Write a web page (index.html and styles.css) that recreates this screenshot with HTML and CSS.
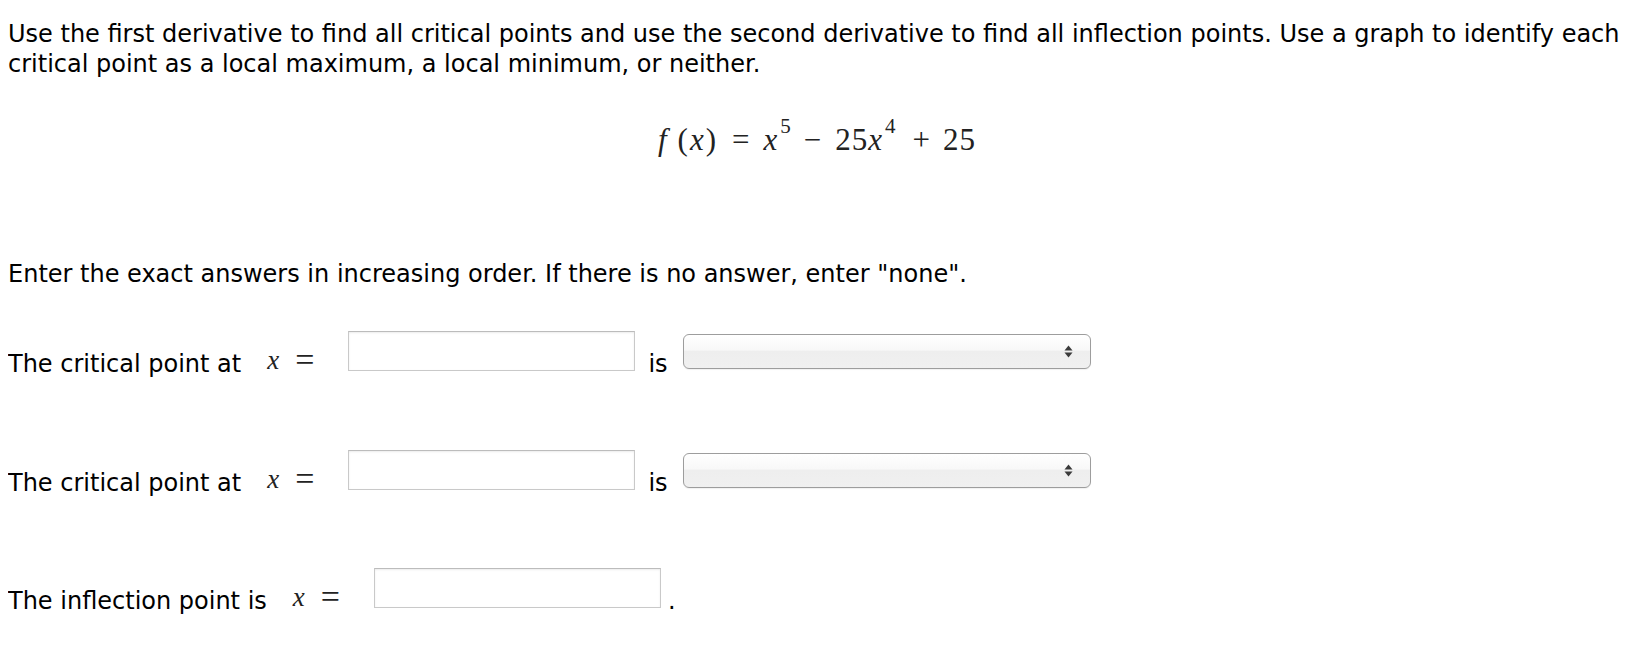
FILE: index.html
```html
<!DOCTYPE html>
<html>
<head>
<meta charset="utf-8">
<link rel="stylesheet" href="styles.css">
</head>
<body>
<p class="intro">Use the first derivative to find all critical points and use the second derivative to find all inflection points. Use a graph to identify each critical point as a local maximum, a local minimum, or neither.</p>
<div class="formula">
  <span class="fn">f</span><span class="paren">(</span><span class="var">x</span><span class="paren">)</span><span class="op">=</span><span class="var">x</span><sup class="sup">5</sup><span class="op op-minus">−</span><span class="num">25</span><span class="var">x</span><sup class="sup">4</sup><span class="op op-plus">+</span><span class="num">25</span>
</div>
<p class="note">Enter the exact answers in increasing order. If there is no answer, enter "none".</p>

<div class="row row-first">
  <span class="label">The critical point at</span>
  <span class="math"><span class="var">x</span><span class="eq">=</span></span>
  <input class="answer" type="text">
  <span class="label is">is</span>
  <div class="select"><span class="arrows"><svg width="9" height="13" viewBox="0 0 9 13"><path d="M4.5 0.5 L8.5 5.5 H0.5 Z" fill="#3a3a3a"/><path d="M4.5 12.5 L8.5 7.5 H0.5 Z" fill="#3a3a3a"/></svg></span></div>
</div>

<div class="row row-second">
  <span class="label">The critical point at</span>
  <span class="math"><span class="var">x</span><span class="eq">=</span></span>
  <input class="answer" type="text">
  <span class="label is">is</span>
  <div class="select"><span class="arrows"><svg width="9" height="13" viewBox="0 0 9 13"><path d="M4.5 0.5 L8.5 5.5 H0.5 Z" fill="#3a3a3a"/><path d="M4.5 12.5 L8.5 7.5 H0.5 Z" fill="#3a3a3a"/></svg></span></div>
</div>

<div class="row row-third">
  <span class="label">The inflection point is</span>
  <span class="math"><span class="var">x</span><span class="eq">=</span></span>
  <input class="answer" type="text">
  <span class="label dot">.</span>
</div>
</body>
</html>
```

FILE: styles.css
```css
html, body {
  background: #fff;
}
body {
  margin: 8px;
  padding-bottom: 30px;
  font-family: "DejaVu Sans", Verdana, sans-serif;
  font-size: 24px;
  color: #000;
}
.intro {
  margin: 11px 0 0;
  line-height: 30px;
}
.formula {
  margin-top: 41px;
  height: 40px;
  line-height: 40px;
  text-align: center;
  font-family: "Liberation Serif", "Times New Roman", serif;
  font-size: 31px;
  color: #222;
  white-space: nowrap;
}
.formula .fn {
  font-style: italic;
  margin-right: 9px;
}
.formula .var {
  font-style: italic;
}
.formula .num {
  letter-spacing: 1px;
}
.formula .paren {
  margin: 0 2px;
}
.formula .op {
  margin: 0 14px;
}
.formula .op-minus {
  margin: 0 14px 0 13px;
}
.formula .op-plus {
  margin: 0 13px 0 17px;
}
.formula .sup {
  font-size: 21px;
  vertical-align: 17px;
  line-height: 0;
  margin-left: 3px;
}
.note {
  margin: 99px 0 0;
  line-height: 30px;
}
.row {
  display: flex;
  align-items: center;
  height: 40px;
}
.row-first { margin-top: 42px; }
.row-second { margin-top: 79px; }
.row-third { margin-top: 78px; }
.label {
  align-self: flex-end;
  line-height: 24px;
  margin-bottom: -5px;
  white-space: nowrap;
}
.math {
  align-self: flex-end;
  margin-bottom: -3px;
  margin-left: 26px;
  font-family: "Liberation Serif", "Times New Roman", serif;
  font-size: 27px;
  line-height: 27px;
  color: #222;
  white-space: nowrap;
}
.math .var { font-style: italic; }
.math .eq {
  margin-left: 16px;
  font-size: 34px;
  line-height: 27px;
  vertical-align: -2px;
}
.answer {
  box-sizing: border-box;
  flex: none;
  width: 287px;
  height: 40px;
  margin: 0 0 0 34px;
  padding: 0 6px;
  border: 1px solid #c9c9c9;
  border-top-color: #bcbcbc;
  box-shadow: inset 0 1px 2px rgba(0,0,0,0.08);
  background: #fff;
  font: inherit;
  outline: none;
}
.is {
  margin-left: 13px;
}
.dot {
  margin-left: 7px;
}
.select {
  box-sizing: border-box;
  flex: none;
  width: 408px;
  height: 35px;
  margin-left: 15px;
  border: 1px solid #9d9d9d;
  border-radius: 6px;
  background: linear-gradient(#ffffff 0%, #f8f8f8 45%, #eeeeee 50%, #f0f0f0 100%);
  box-shadow: 0 1px 1px rgba(0,0,0,0.06);
  display: flex;
  align-items: center;
  justify-content: flex-end;
  padding-right: 17px;
}
.arrows {
  display: flex;
}
```
